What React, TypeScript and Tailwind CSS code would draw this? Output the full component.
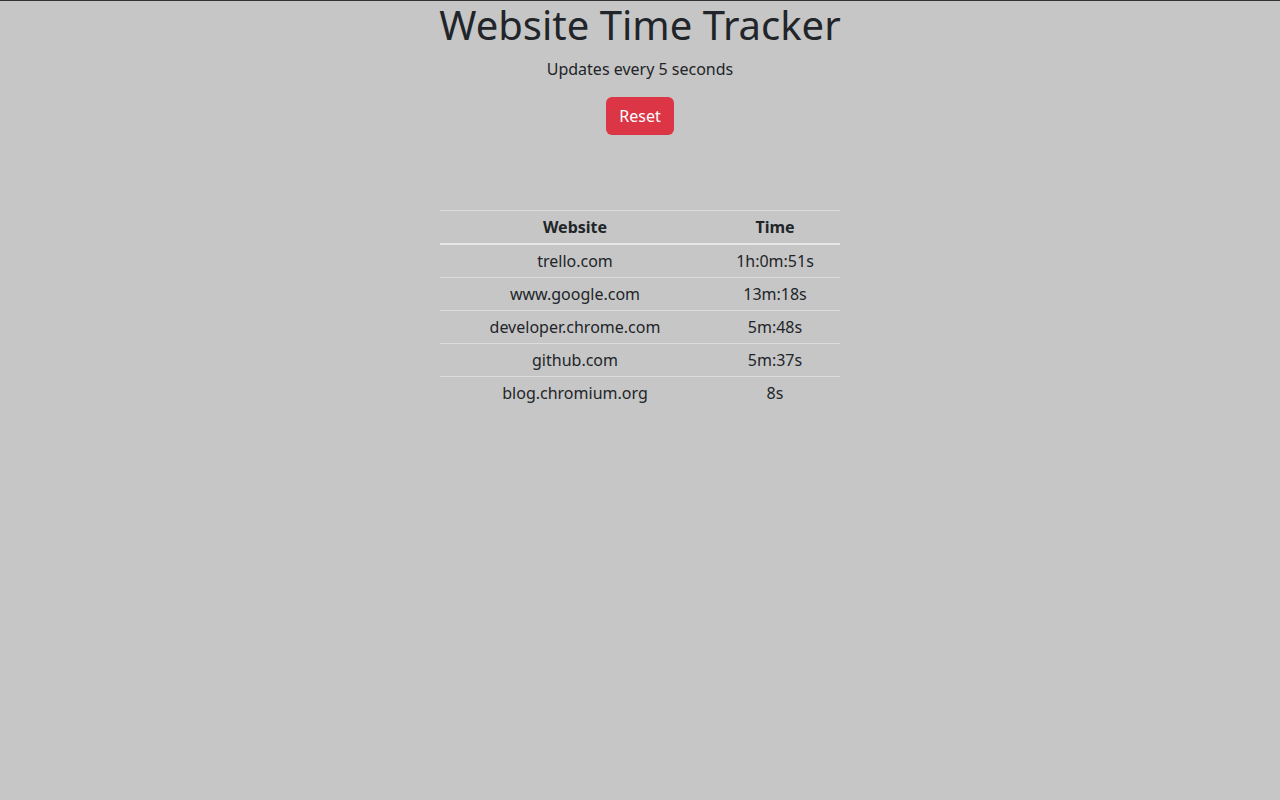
const ROWS = [
  { site: "trello.com", time: "1h:0m:51s" },
  { site: "www.google.com", time: "13m:18s" },
  { site: "developer.chrome.com", time: "5m:48s" },
  { site: "github.com", time: "5m:37s" },
  { site: "blog.chromium.org", time: "8s" },
];

export default function App() {
  return (
    <div
      className="min-h-[800px] bg-[#c6c6c6] border-t border-[#333] text-[#212529] text-center"
      style={{ fontFamily: '"Noto Sans", "Open Sans", sans-serif' }}
    >
      {/* Header */}
      <h1 className="text-[40px] leading-[48px] font-normal mb-2">Website Time Tracker</h1>
      <p className="text-base leading-6 mb-4">Updates every 5 seconds</p>
      <button className="bg-[#dc3545] text-white text-base leading-6 px-[13px] py-[7px] rounded-md">
        Reset
      </button>

      {/* Table */}
      <div className="flex justify-center mt-[75px]">
        <table className="w-[400px] border-collapse text-base leading-6">
          <thead>
            <tr className="border-t border-b-2 border-t-[#dadcdf] border-b-[#e4e6e8]">
              <th className="w-[270px] py-1 font-bold">Website</th>
              <th className="py-1 font-bold">Time</th>
            </tr>
          </thead>
          <tbody>
            {ROWS.map((r, i) => (
              <tr key={r.site} className={i < ROWS.length - 1 ? "border-b border-[#dadcdf]" : ""}>
                <td className="py-1">{r.site}</td>
                <td className="py-1">{r.time}</td>
              </tr>
            ))}
          </tbody>
        </table>
      </div>
    </div>
  );
}
